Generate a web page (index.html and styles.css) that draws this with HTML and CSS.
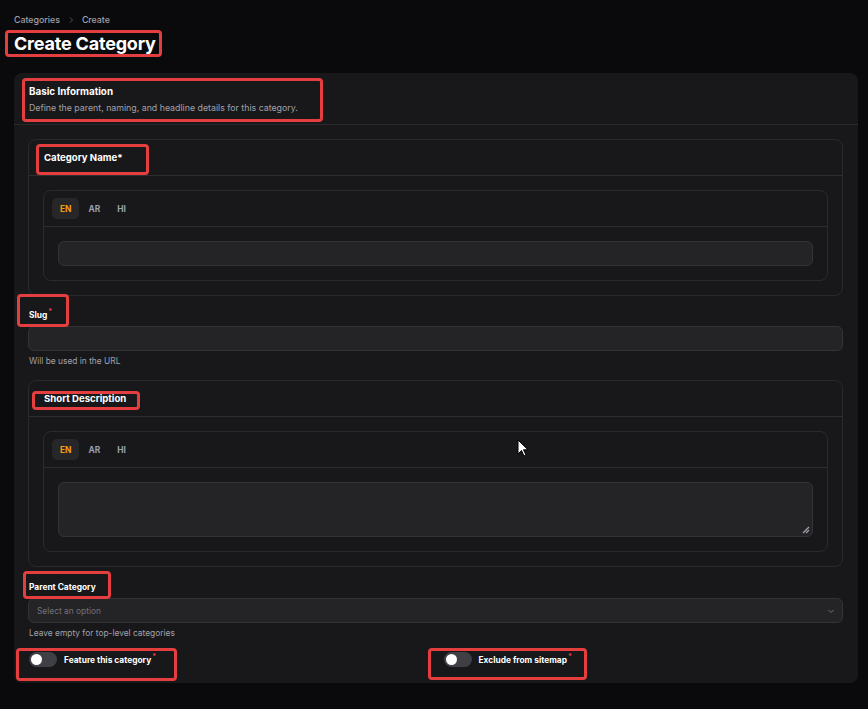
FILE: index.html
```html
<!DOCTYPE html>
<html lang="en">
<head>
<meta charset="utf-8">
<title>Create Category</title>
<link rel="stylesheet" href="styles.css">
</head>
<body>
<div class="page">
  <nav class="crumbs">
    <span>Categories</span>
    <svg class="crumb-sep" width="8" height="8" viewBox="0 0 8 8"><path d="M3 1.5 L5.5 4 L3 6.5" fill="none" stroke="#52525b" stroke-width="1"/></svg>
    <span>Create</span>
  </nav>
  <h1 class="title">Create Category</h1>

  <section class="card">
    <header class="card-head">
      <h2 class="card-title">Basic Information</h2>
      <p class="card-desc">Define the parent, naming, and headline details for this category.</p>
    </header>
    <div class="card-body">
      <div class="box">
        <div class="box-head">Category Name*</div>
        <div class="box-body">
          <div class="tabs-box">
            <div class="tabs">
              <span class="tab active">EN</span>
              <span class="tab">AR</span>
              <span class="tab">HI</span>
            </div>
            <div class="tabs-body">
              <div class="input"></div>
            </div>
          </div>
        </div>
      </div>

      <div class="field">
        <label class="label">Slug<sup class="req">*</sup></label>
        <div class="input"></div>
        <p class="help">Will be used in the URL</p>
      </div>

      <div class="box">
        <div class="box-head">Short Description</div>
        <div class="box-body">
          <div class="tabs-box">
            <div class="tabs">
              <span class="tab active">EN</span>
              <span class="tab">AR</span>
              <span class="tab">HI</span>
            </div>
            <div class="tabs-body">
              <div class="input textarea">
                <svg class="grip" width="8" height="8" viewBox="0 0 8 8"><path d="M7 1 L1 7 M7 4 L4 7" stroke="#a1a1aa" stroke-width="1.3"/></svg>
              </div>
            </div>
          </div>
        </div>
      </div>

      <div class="field field-parent">
        <label class="label">Parent Category</label>
        <div class="input select">
          <span class="placeholder">Select an option</span>
          <svg width="8" height="8" viewBox="0 0 8 8"><path d="M1.5 3 L4 5.5 L6.5 3" fill="none" stroke="#71717a" stroke-width="1"/></svg>
        </div>
        <p class="help">Leave empty for top-level categories</p>
      </div>

      <div class="toggles">
        <div class="toggle-row"><span class="switch"><span class="knob"></span></span><span class="toggle-label">Feature this category<sup class="req">*</sup></span></div>
        <div class="toggle-row"><span class="switch"><span class="knob"></span></span><span class="toggle-label">Exclude from sitemap<sup class="req">*</sup></span></div>
      </div>
    </div>
  </section>
</div>

<div class="mark m-title"></div>
<div class="mark m-basic"></div>
<div class="mark m-name"></div>
<div class="mark m-slug"></div>
<div class="mark m-short"></div>
<div class="mark m-parent"></div>
<div class="mark m-feature"></div>
<div class="mark m-exclude"></div>

<svg class="cursor" width="12" height="19" viewBox="0 0 12 19"><path d="M1 1 L1 15 L4.5 11.5 L7 17 L9 16 L6.5 10.8 L11 10.8 Z" fill="#fff" stroke="#000" stroke-width="1"/></svg>
</body>
</html>
```

FILE: styles.css
```css
* { box-sizing: border-box; }
html, body { margin: 0; padding: 0; }
body {
  background: #0a0a0c;
  font-family: Inter, "Noto Sans", sans-serif;
  color: #fafafa;
  width: 868px;
  height: 709px;
  overflow: hidden;
  position: relative;
}
.page { padding: 13px 10px 0 14px; }
.crumbs {
  display: flex;
  align-items: center;
  gap: 6px;
  font-size: 8.8px;
  line-height: 14px;
  color: #a1a1aa;
  font-weight: 500;
}
.crumb-sep { margin: 0 1px; }
.title {
  margin: 6px 0 0;
  font-size: 18px;
  line-height: 22px;
  font-weight: 700;
  color: #fff;
  letter-spacing: -0.2px;
}
.card {
  margin-top: 18px;
  background: #18181b;
  border-radius: 8px;
  width: 844px;
  height: 610px;
}
.card-head {
  padding: 12px 15px 10px;
  border-bottom: 1px solid #2a2a2e;
}
.card-title {
  margin: 0;
  font-size: 9.8px;
  line-height: 14px;
  font-weight: 700;
  color: #fff;
}
.card-desc {
  margin: 3px 0 0;
  font-size: 8.8px;
  line-height: 12px;
  color: #a1a1aa;
}
.card-body {
  padding: 14px 15px 0 14px;
  display: flex;
  flex-direction: column;
}
.box {
  border: 1px solid #2a2a2e;
  border-radius: 8px;
}
.box-head {
  height: 36px;
  padding: 0 15px;
  display: flex;
  align-items: center;
  font-size: 9.6px;
  font-weight: 700;
  color: #fff;
  border-bottom: 1px solid #2e2e32;
}
.box-body { padding: 14px; }
.tabs-box {
  border: 1px solid #2a2a2e;
  border-radius: 8px;
}
.tabs {
  height: 36px;
  padding: 0 8px;
  display: flex;
  align-items: center;
  gap: 1px;
  border-bottom: 1px solid #2e2e32;
}
.tab {
  height: 21px;
  padding: 0 8px;
  border-radius: 5px;
  display: flex;
  align-items: center;
  font-size: 8.4px;
  font-weight: 700;
  color: #9aa1b3;
}
.tab.active { background: #27272a; color: #f59e0b; }
.tabs-body { padding: 14px; }
.input {
  height: 25px;
  background: #242427;
  border: 1px solid #343438;
  border-radius: 6px;
}
.textarea { height: 55px; position: relative; }
.grip { position: absolute; right: 2px; bottom: 2px; }
.field { display: flex; flex-direction: column; padding-left: 1px; }
.field .input { margin-left: -1px; }
.label {
  margin-top: 13px;
  font-size: 8.4px;
  line-height: 13px;
  font-weight: 700;
  color: #fff;
  margin-bottom: 4px;
}
.req { color: #ef4444; font-size: 7px; font-weight: 700; vertical-align: 4px; line-height: 0; margin-left: 1px; }
.help {
  margin: 4px 0 13px;
  font-size: 8.4px;
  line-height: 12px;
  color: #a1a1aa;
}
.field-parent .label { margin-top: 14px; margin-bottom: 4px; }
.select {
  display: flex;
  align-items: center;
  justify-content: space-between;
  padding: 0 7px 0 8px;
}
.placeholder { font-size: 8.4px; color: #71717a; }
.field-parent .help { margin-bottom: 13px; }
.toggles {
  display: grid;
  grid-template-columns: 1fr 1fr;
  column-gap: 14px;
}
.toggle-row {
  display: flex;
  align-items: center;
  gap: 7px;
  padding-left: 1px;
}
.switch {
  width: 28px;
  height: 15px;
  border-radius: 8px;
  background: #3f3f46;
  position: relative;
  display: inline-block;
}
.knob {
  position: absolute;
  left: 2px;
  top: 2px;
  width: 11px;
  height: 11px;
  border-radius: 50%;
  background: #fff;
}
.toggle-label {
  font-size: 8.4px;
  font-weight: 700;
  color: #fff;
}
.mark {
  position: absolute;
  border: 3px solid #e53e3e;
  border-radius: 4px;
  pointer-events: none;
}
.m-title { left: 5px; top: 30px; width: 157px; height: 27px; }
.m-basic { left: 22px; top: 78px; width: 301px; height: 44px; }
.m-name { left: 36px; top: 144px; width: 113px; height: 31px; }
.m-slug { left: 17px; top: 294px; width: 52px; height: 33px; }
.m-short { left: 32px; top: 391px; width: 108px; height: 19px; }
.m-parent { left: 23px; top: 571px; width: 88px; height: 28px; }
.m-feature { left: 16px; top: 648px; width: 161px; height: 33px; }
.m-exclude { left: 428px; top: 648px; width: 159px; height: 32px; }
.cursor { position: absolute; left: 517px; top: 439px; }
```
